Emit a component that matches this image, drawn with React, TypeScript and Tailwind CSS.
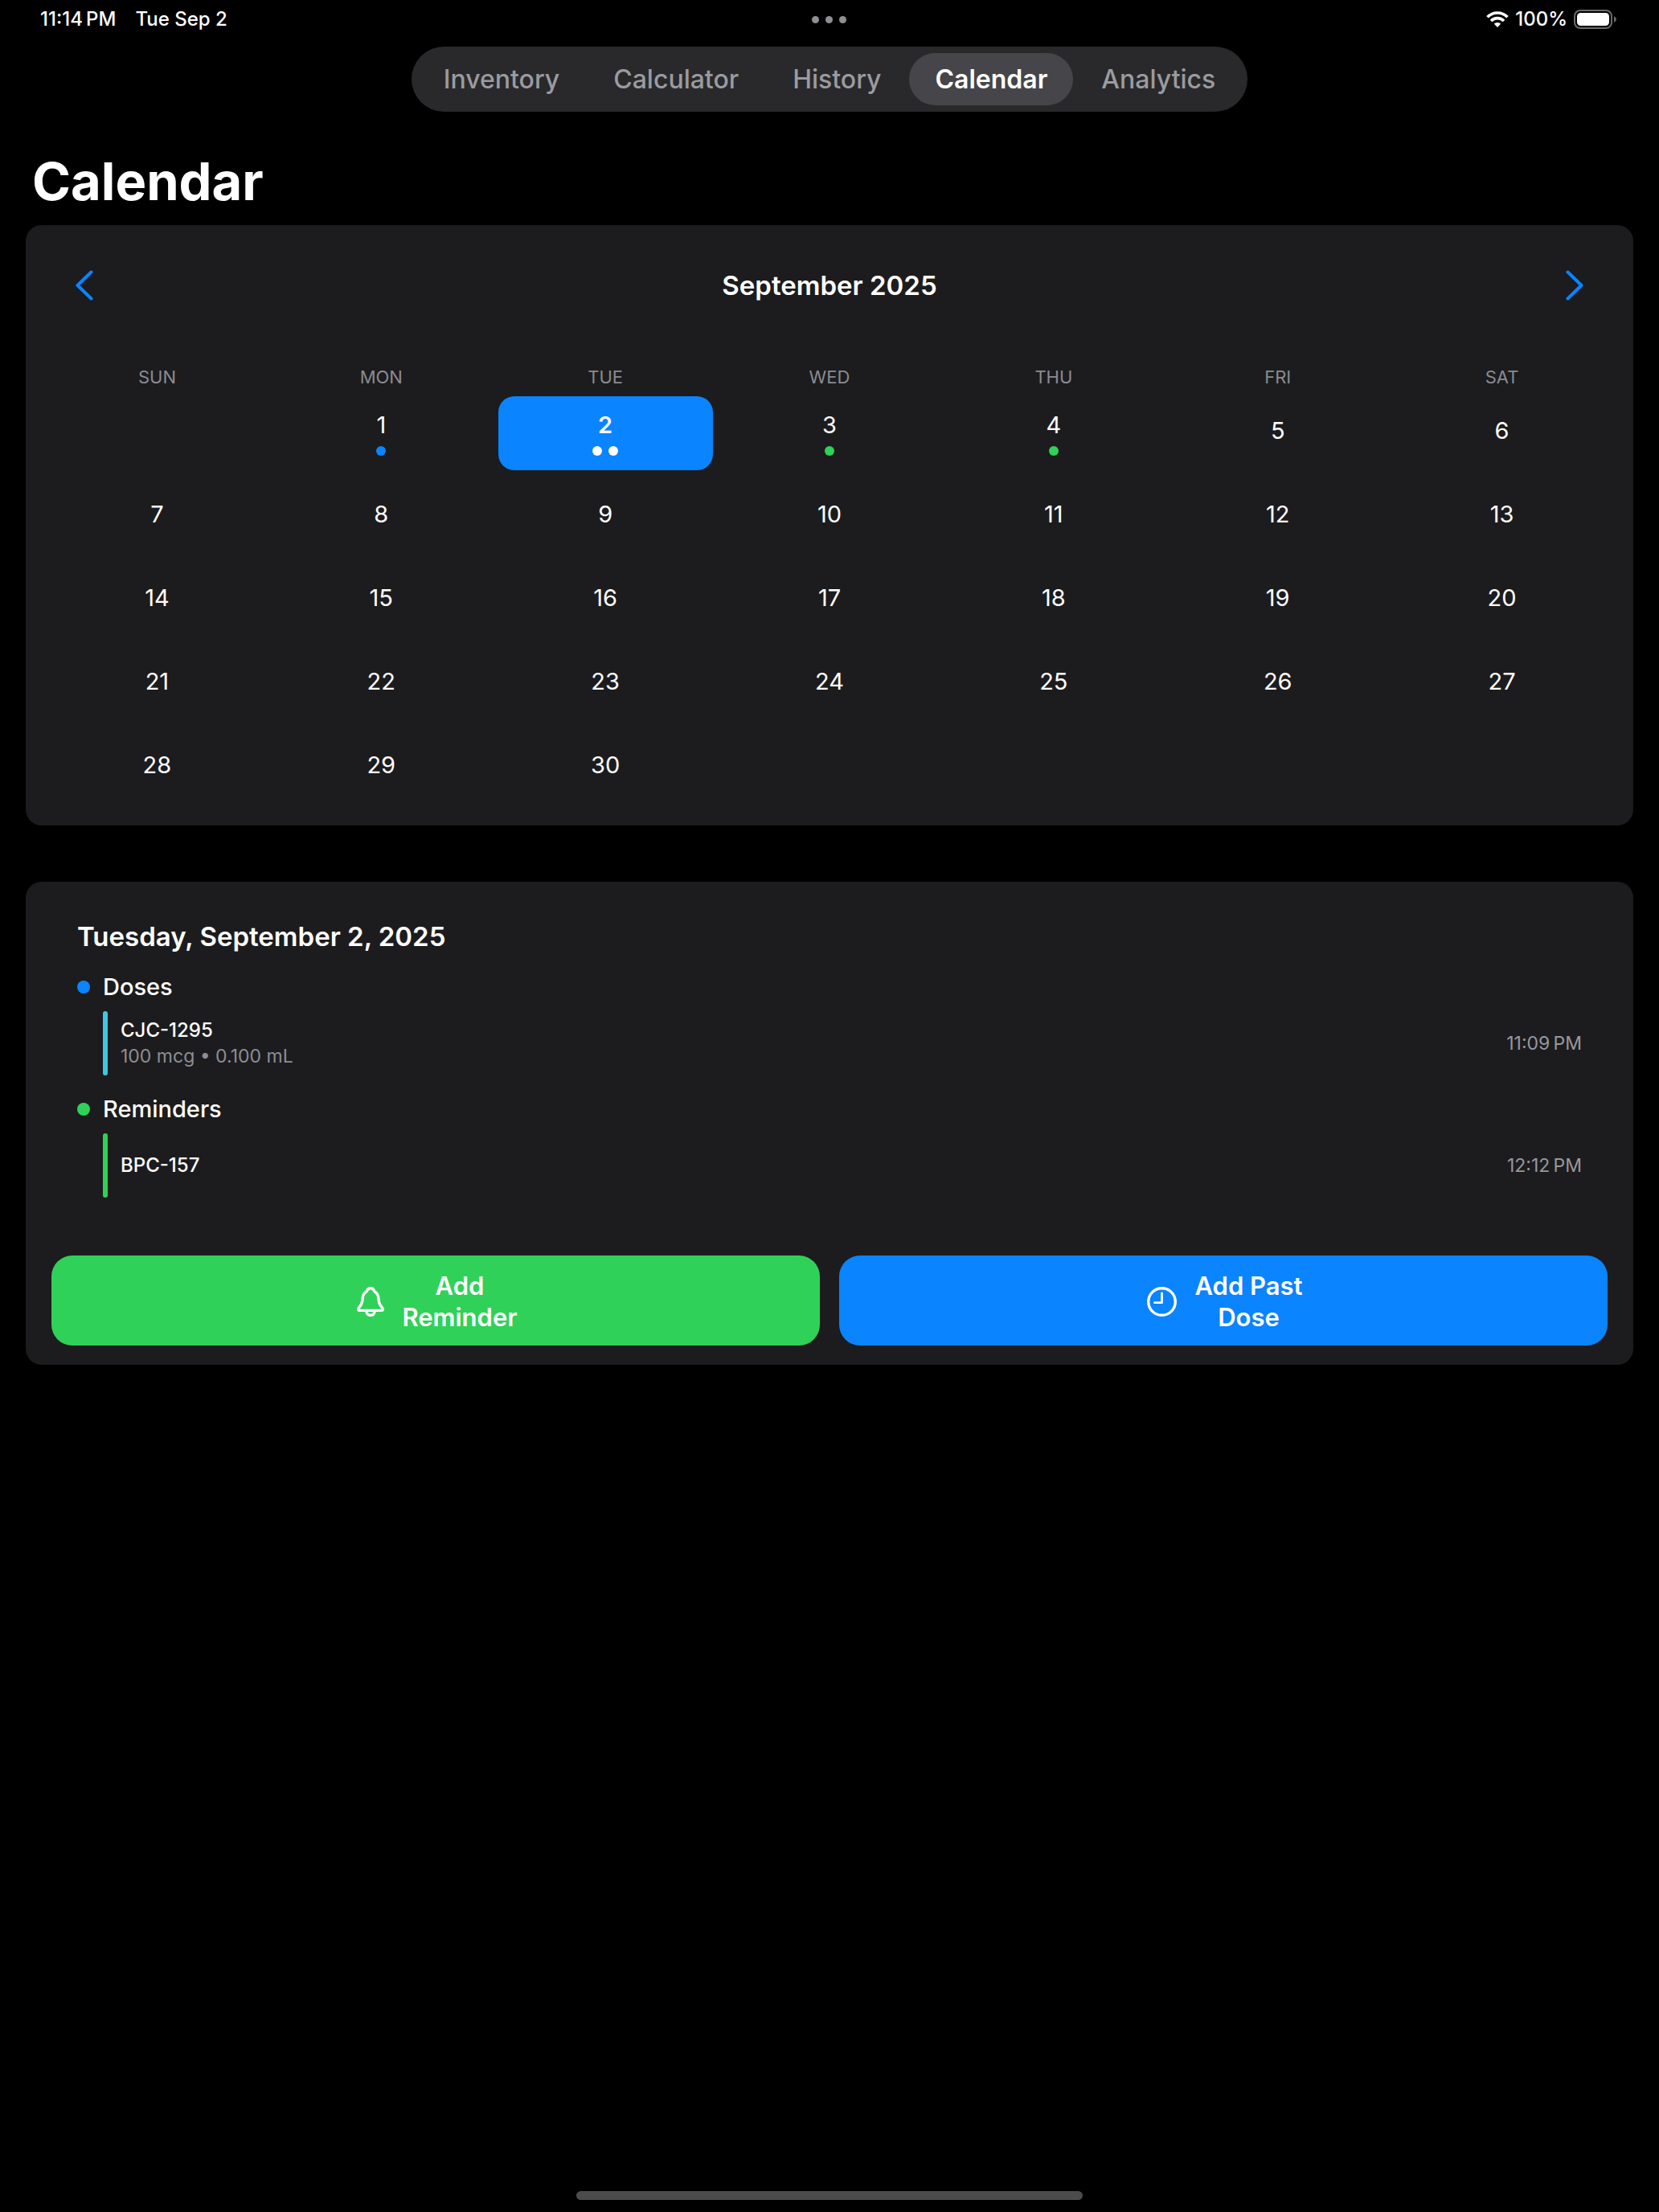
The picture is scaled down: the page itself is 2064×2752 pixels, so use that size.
import React from "react";

type Marker = "blue" | "green" | "white";

const tabs = ["Inventory", "Calculator", "History", "Calendar", "Analytics"];
const weekdays = ["SUN", "MON", "TUE", "WED", "THU", "FRI", "SAT"];
const markers: Record<number, Marker[]> = {
  1: ["blue"],
  2: ["white", "white"],
  3: ["green"],
  4: ["green"],
};
const markerColor: Record<Marker, string> = {
  blue: "bg-[#0a84ff]",
  green: "bg-[#30d158]",
  white: "bg-white",
};
const LEADING_BLANKS = 1;
const SELECTED = 2;

function StatusBar() {
  return (
    <div className="grid h-12 grid-cols-3 items-center pr-[52px] pl-[50px] text-2xl font-medium leading-7">
      <div className="flex gap-6">
        <span>11:14{"\u2009"}PM</span>
        <span>Tue Sep 2</span>
      </div>
      <div className="flex justify-center gap-2">
        <span className="size-[9px] rounded-full bg-[#8e8e93]" />
        <span className="size-[9px] rounded-full bg-[#8e8e93]" />
        <span className="size-[9px] rounded-full bg-[#8e8e93]" />
      </div>
      <div className="flex items-center justify-end gap-2">
        <svg className="h-5 w-7" viewBox="0 0 28 20" fill="none" stroke="white" strokeWidth="3.6" aria-hidden="true">
          <path d="M1.500 7.200a17.600 17.600 0 0 1 25 0" />
          <path d="M6 12a11.200 11.200 0 0 1 16 0" />
          <path d="M14 20l-4.200-4.400a6 6 0 0 1 8.400 0z" fill="white" stroke="none" />
        </svg>
        <span>100%</span>
        <svg className="h-6 w-[54px]" viewBox="0 0 54 24" aria-hidden="true">
          <rect x="1" y="1" width="46" height="22" rx="7" fill="none" stroke="#6b6b6b" strokeWidth="2" />
          <rect x="4" y="4" width="40" height="16" rx="4.5" fill="white" />
          <path d="M50 8.200c1.700.6 2.800 2 2.800 3.800s-1.100 3.200-2.800 3.800z" fill="#6b6b6b" />
        </svg>
      </div>
    </div>
  );
}

function TabBar() {
  return (
    <nav className="mt-2.5 flex justify-center">
      <div className="flex gap-[3px] rounded-full bg-[#29292b] p-2">
        {tabs.map((tab) => (
          <button
            key={tab}
            type="button"
            className={
              tab === "Calendar"
                ? "rounded-full bg-[#464549] px-8 py-3 text-[32px] leading-[41px] font-semibold text-white"
                : "rounded-full px-8 py-3 text-[32px] leading-[41px] font-medium text-[#9b9b9f]"
            }
          >
            {tab}
          </button>
        ))}
      </div>
    </nav>
  );
}

function Chevron({ flip = false }: { flip?: boolean }) {
  return (
    <svg className="h-[38px] w-[22px]" viewBox="0 0 22 38" fill="none" stroke="#0a84ff" strokeWidth="4" strokeLinecap="round" strokeLinejoin="round" aria-hidden="true">
      <path d={flip ? "M2.5 2.5L19.5 19l-17 16.5" : "M19.5 2.5L2.5 19l17 16.5"} />
    </svg>
  );
}

function Day({ day }: { day: number }) {
  const dots = markers[day];
  const selected = day === SELECTED;
  return (
    <button
      type="button"
      aria-pressed={selected}
      className={
        selected
          ? "flex h-[92px] flex-col items-center justify-center gap-2 rounded-[20px] bg-[#0a84ff] text-[29px] leading-9 font-semibold"
          : "flex h-[92px] flex-col items-center justify-center gap-2 rounded-[20px] text-[29px] leading-9"
      }
    >
      <span className={dots ? "" : "pb-1.5"}>{day}</span>
      {dots && (
        <span className="flex gap-2">
          {dots.map((dot, i) => (
            <span key={i} className={`size-3 rounded-full ${markerColor[dot]}`} />
          ))}
        </span>
      )}
    </button>
  );
}

function MonthCard() {
  return (
    <section className="rounded-[20px] bg-[#1c1c1e] px-[30px] pt-11 pb-[26px]">
      <div className="flex items-center justify-between px-8">
        <button type="button" aria-label="Previous month" className="py-3">
          <Chevron />
        </button>
        <h2 className="text-[33px] leading-10 font-semibold">September 2025</h2>
        <button type="button" aria-label="Next month" className="py-3">
          <Chevron flip />
        </button>
      </div>
      <div className="mt-[69px] grid grid-cols-7 gap-x-3">
        {weekdays.map((name) => (
          <span key={name} className="text-center text-[22px] leading-7 text-[#8b8b90]">
            {name}
          </span>
        ))}
      </div>
      <div className="mt-2.5 grid grid-cols-7 gap-3">
        {Array.from({ length: LEADING_BLANKS }, (_, i) => (
          <span key={`blank-${i}`} />
        ))}
        {Array.from({ length: 30 }, (_, i) => (
          <Day key={i} day={i + 1} />
        ))}
      </div>
    </section>
  );
}

interface EntryGroupProps {
  title: string;
  dot: string;
  bar: string;
  name: string;
  detail?: string;
  time: string;
}

function EntryGroup({ title, dot, bar, name, detail, time }: EntryGroupProps) {
  return (
    <div className="flex flex-col gap-3">
      <h3 className="flex items-center gap-4 text-[29px] leading-9 font-medium">
        <span className={`size-4 rounded-full ${dot}`} />
        {title}
      </h3>
      <div className="ml-8 flex h-20 items-center">
        <span className={`h-full w-1.5 rounded-full ${bar}`} />
        <div className="ml-4 flex flex-col">
          <span className="text-[24px] leading-8 font-medium">{name}</span>
          {detail && <span className="text-[23px] leading-8 text-[#8e8e93]">{detail}</span>}
        </div>
        <time className="ml-auto text-[23px] leading-8 text-[#98989f]">{time}</time>
      </div>
    </div>
  );
}

function BellIcon() {
  return (
    <svg className="h-[37px] w-[34px]" viewBox="0 0 34 37" fill="none" stroke="white" strokeWidth="3.4" strokeLinejoin="round" aria-hidden="true">
      <path d="M12.3 5.6C12.9 3 14.6 1.7 17 1.7s4.1 1.3 4.7 3.9c3.5 2 5.1 5.2 5.3 9.6.3 5 1 7 4.1 10.300.9 1 1.2 1.6 1.2 2.300 0 1-.6 1.600-1.700 1.600H3.400c-1.100 0-1.700-.6-1.700-1.600 0-.7.3-1.300 1.200-2.300C6 22.200 6.700 20.200 7 15.200c.2-4.400 1.800-7.600 5.300-9.600z" />
      <path d="M11.800 30c.1 3.400 2.300 5.300 5.200 5.300s5.100-1.900 5.200-5.300" />
    </svg>
  );
}

function ClockIcon() {
  return (
    <svg className="size-[37px]" viewBox="0 0 37 37" fill="none" stroke="white" strokeWidth="3.4" strokeLinecap="round" strokeLinejoin="round" aria-hidden="true">
      <circle cx="18.5" cy="18.5" r="16.800" />
      <path d="M18.500 8v11.700H9.500" strokeWidth="2.800" />
    </svg>
  );
}

function DetailCard() {
  return (
    <section className="mt-[70px] rounded-[20px] bg-[#1c1c1e] px-8 pt-12 pb-6">
      <div className="px-8">
        <h2 className="text-[33px] leading-10 font-semibold">Tuesday, September 2, 2025</h2>
        <div className="mt-[25px] flex flex-col gap-6">
          <EntryGroup title="Doses" dot="bg-[#0a84ff]" bar="bg-[#40c8e0]" name="CJC-1295" detail="100 mcg • 0.100 mL" time={"11:09\u2009PM"} />
          <EntryGroup title="Reminders" dot="bg-[#30d158]" bar="bg-[#30d158]" name="BPC-157" time={"12:12\u2009PM"} />
        </div>
      </div>
      <div className="mt-[72px] grid grid-cols-2 gap-6 text-[31px] leading-[39px] font-semibold">
        <button type="button" className="flex h-28 items-center justify-center gap-[22px] rounded-[26px] bg-[#30d158] pt-0.5 pl-1">
          <BellIcon />
          <span>
            Add
            <br />
            Reminder
          </span>
        </button>
        <button type="button" className="flex h-28 items-center justify-center gap-[22px] rounded-[26px] bg-[#0a84ff] pt-0.5 pl-1">
          <ClockIcon />
          <span>
            Add Past
            <br />
            Dose
          </span>
        </button>
      </div>
    </section>
  );
}

export default function App() {
  return (
    <div className="flex min-h-screen flex-col bg-black font-['Inter',sans-serif] text-white">
      <StatusBar />
      <TabBar />
      <main className="px-8">
        <h1 className="mt-[49px] mb-4 ml-2 text-[65px] leading-[76px] font-bold">Calendar</h1>
        <MonthCard />
        <DetailCard />
      </main>
      <div className="mx-auto mt-auto mb-[15px] h-[11px] w-[630px] rounded-full bg-[#4c4c4c]" />
    </div>
  );
}
